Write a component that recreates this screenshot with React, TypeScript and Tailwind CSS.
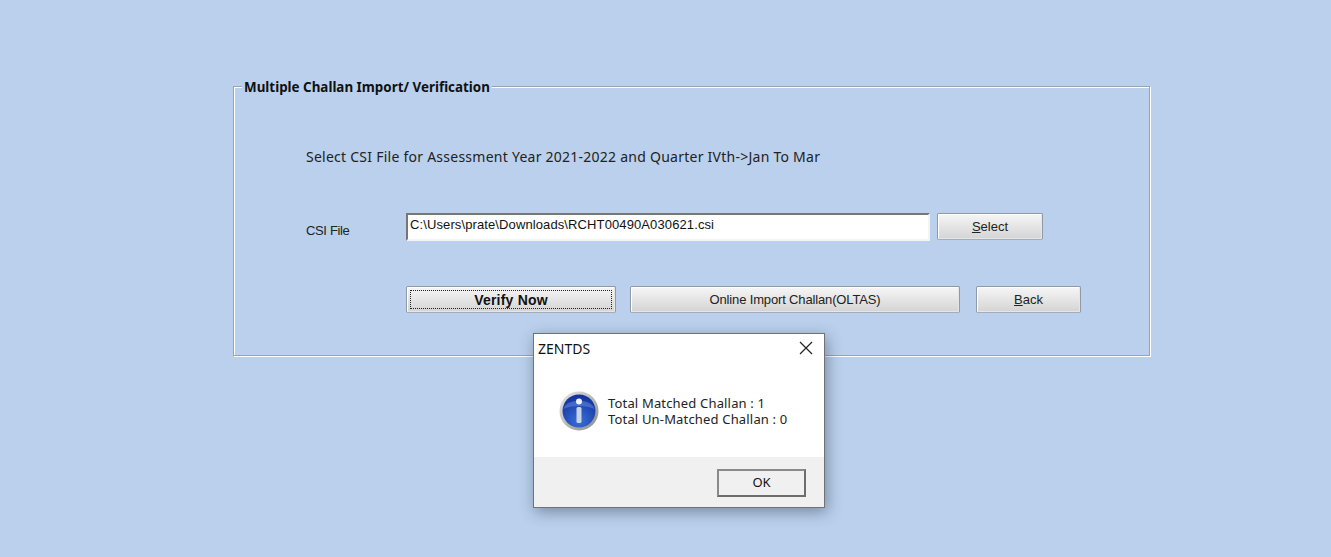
const ui = { fontFamily: '"Noto Sans", "DejaVu Sans", sans-serif' }
const narrow = { fontFamily: '"Liberation Sans", Arial, sans-serif' }

function ClassicButton({ children, className = '' }: { children: React.ReactNode; className?: string }) {
  return (
    <button
      style={narrow}
      className={`h-[27px] flex items-center justify-center text-[13px] leading-none text-[#222] rounded-[2px] border border-[#8f9aa8] border-b-[#a3acb8] shadow-[inset_1px_1px_0_#fff,inset_-1px_-1px_0_#e6e6e6] bg-gradient-to-b from-[#f6f6f6] to-[#d4d4d4] ${className}`}
    >
      {children}
    </button>
  )
}

function InfoIcon() {
  return (
    <svg width="40" height="40" viewBox="0 0 40 40">
      <defs>
        <linearGradient id="ring" x1="0" y1="0" x2="1" y2="1">
          <stop offset="0" stopColor="#e8e8e8" />
          <stop offset="1" stopColor="#8a8a8a" />
        </linearGradient>
        <radialGradient id="ball" cx="0.5" cy="0.8" r="0.8">
          <stop offset="0" stopColor="#3a6fd8" />
          <stop offset="1" stopColor="#10309c" />
        </radialGradient>
      </defs>
      <circle cx="20" cy="20" r="19.5" fill="url(#ring)" />
      <circle cx="20" cy="20" r="16.5" fill="url(#ball)" />
      <path d="M4.5 18C7 7 33 7 35.5 18C28 14 12 14 4.5 18Z" fill="#7f9fe6" opacity="0.4" />
      <circle cx="20" cy="10.5" r="3" fill="#eef2fb" />
      <rect x="17.5" y="16" width="5" height="16" rx="1.5" fill="#c9d2e6" />
    </svg>
  )
}

export default function App() {
  return (
    <div className="relative h-[557px] w-[1331px] overflow-hidden bg-[#bad0ec] pt-[86px] pl-[233px]" style={ui}>
      <div className="relative h-[270px] w-[917px] border border-[#9aa3ae] shadow-[inset_1px_1px_0_#fff,1px_1px_0_#fff] pl-[72px] pt-[61px]">
        <div className="absolute left-[8px] top-[-8px] bg-[#bad0ec] px-[2px] text-[13.4px] leading-[16px] font-bold text-[#111] whitespace-nowrap">
          Multiple Challan Import/ Verification
        </div>

        <p className="h-[18px] text-[14px] leading-[18px] tracking-[0.25px] text-[#222] whitespace-nowrap">
          Select CSI File for Assessment Year 2021-2022 and Quarter IVth-&gt;Jan To Mar
        </p>

        <div className="mt-[47px] flex items-start">
          <span className="w-[100px] pt-[8px] text-[13px] tracking-[-0.35px] text-[#222]" style={narrow}>CSI File</span>
          <div className="flex h-[28px] w-[524px] items-center border-2 border-[#f4f4f4] border-t-[#777] border-l-[#777] bg-white pl-[2px] pb-[4px] text-[13px] tracking-[0.11px] text-[#111]" style={narrow}>
            C:\Users\prate\Downloads\RCHT00490A030621.csi
          </div>
          <ClassicButton className="ml-[7px] w-[106px]">
            <span><span className="underline">S</span>elect</span>
          </ClassicButton>
        </div>

        <div className="mt-[45px] ml-[100px] flex">
          <ClassicButton className="w-[210px] p-[3px]">
            <span className="flex h-full w-full items-center justify-center border border-dotted border-[#222] text-[14px] tracking-[0.2px] font-bold text-[#111]">
              Verify Now
            </span>
          </ClassicButton>
          <ClassicButton className="ml-[14px] w-[330px]">
            <span className="tracking-[-0.15px]">Online Import Challan(OLTAS)</span>
          </ClassicButton>
          <ClassicButton className="ml-[16px] w-[105px]">
            <span><span className="underline">B</span>ack</span>
          </ClassicButton>
        </div>
      </div>

      {/* message box */}
      <div className="absolute left-[533px] top-[333px] flex h-[175px] w-[292px] flex-col border border-[#6f7378] bg-white shadow-[2px_4px_14px_rgba(40,50,70,0.45)]">
        <div className="flex h-[28px] items-center justify-between pl-[4px] pr-[11px] text-[14px] text-[#111]">
          ZENTDS
          <svg width="14" height="14" viewBox="0 0 14 14">
            <path d="M1 1L13 13M13 1L1 13" stroke="#222" strokeWidth="1.2" fill="none" />
          </svg>
        </div>
        <div className="flex flex-1 items-start pl-[25px] pt-[29px]">
          <InfoIcon />
          <div className="ml-[9px] pt-[4px] text-[13px] leading-[16px] tracking-[0.17px] text-[#222]">
            <div>Total Matched Challan : 1</div>
            <div>Total Un-Matched Challan : 0</div>
          </div>
        </div>
        <div className="flex h-[50px] items-start justify-end bg-[#f0f0f0] pt-[12px] pr-[18px]">
          <button className="flex h-[28px] w-[89px] items-center justify-center border-2 border-[#6d6d6d] border-t-[#8a8a8a] border-l-[#8a8a8a] bg-[#f0f0f0] text-[13px] text-[#111]">
            OK
          </button>
        </div>
      </div>
    </div>
  )
}
